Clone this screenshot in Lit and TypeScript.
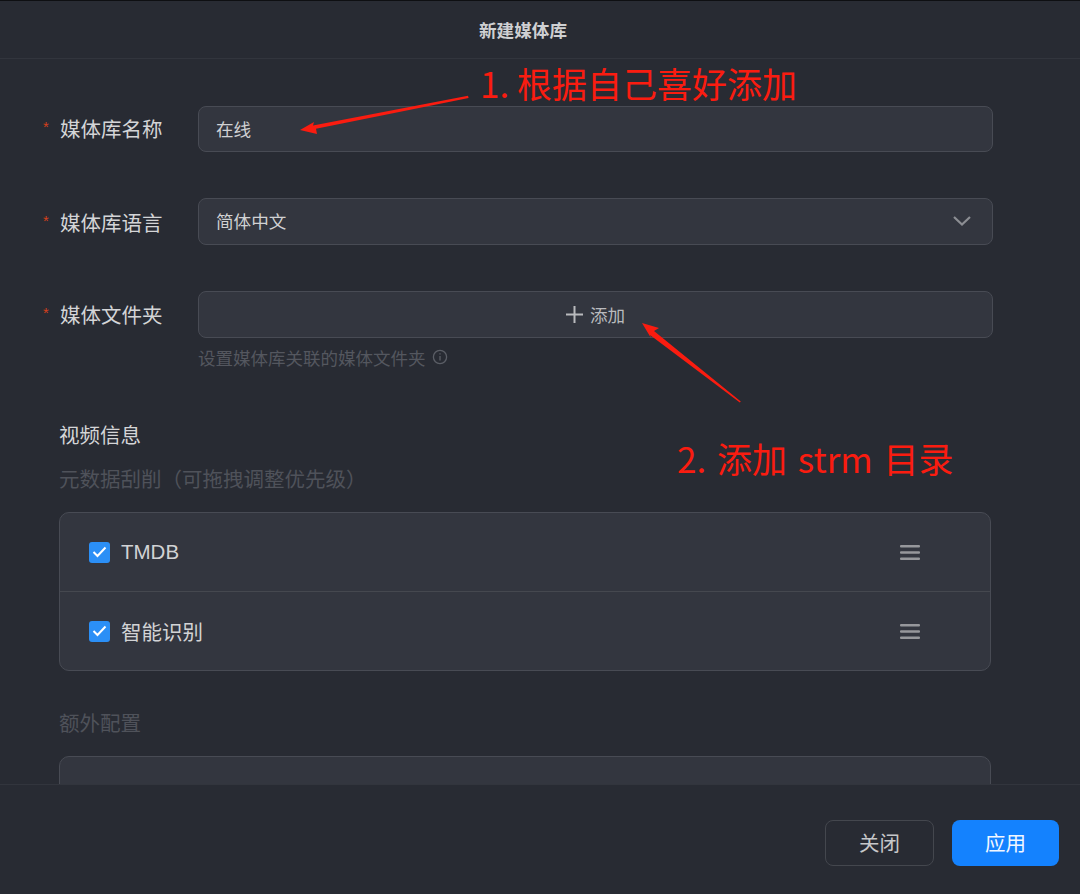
import { LitElement, css, html } from "lit";
import { customElement } from "lit/decorators.js";

const sources = ["TMDB", "智能识别"];

@customElement("app-root")
export class AppRoot extends LitElement {
  static styles = css`
    :host {
      display: block;
      position: relative;
      width: 1080px;
      height: 894px;
      overflow: hidden;
      background: #282b33;
      color: #d2d3d5;
      font-family: "Liberation Sans", "Noto Sans CJK SC", sans-serif;
    }
    .dialog {
      display: flex;
      flex-direction: column;
      height: 894px;
      border-top: 1px solid #0e0f12;
      box-sizing: border-box;
    }
    header {
      flex: none;
      height: 58px;
      box-sizing: border-box;
      border-bottom: 1px solid #32353d;
      padding-right: 34px;
      display: flex;
      align-items: center;
      justify-content: center;
      font-size: 17.6px;
      font-weight: 700;
      color: #cfd0d2;
    }
    main {
      flex: 1;
      min-height: 0;
      overflow: hidden;
      padding: 47px 87px 0 43px;
    }
    .row {
      display: grid;
      grid-template-columns: 155px 1fr;
      margin-bottom: 46px;
    }
    .label {
      display: flex;
      align-items: center;
      height: 46px;
      font-size: 20.5px;
      color: #d4d5d7;
    }
    .label.low {
      padding-top: 2px;
      box-sizing: border-box;
    }
    .star {
      width: 17px;
      flex: none;
      margin-top: -4px;
      font-size: 15px;
      color: #d4401c;
    }
    .field {
      height: 47px;
      box-sizing: border-box;
      display: flex;
      align-items: center;
      padding: 0 17px 2px;
      background: #33363f;
      border: 1px solid #484b54;
      border-radius: 8px;
      font-size: 17.6px;
      color: #d0d1d3;
    }
    .short .label {
      height: 44px;
    }
    .short .field {
      height: 46px;
    }
    .select {
      justify-content: space-between;
      padding: 0 21px 3px 17px;
    }
    .select svg {
      width: 18px;
      height: 10px;
      margin-top: 2px;
    }
    .add {
      justify-content: center;
      gap: 7px;
      padding-bottom: 0;
      color: #b9babd;
    }
    .add svg {
      width: 17px;
      height: 17px;
    }
    .hint {
      display: flex;
      align-items: center;
      gap: 6px;
      height: 24px;
      margin-top: 7px;
      font-size: 17.5px;
      color: #54575f;
    }
    .hint svg {
      width: 16px;
      height: 16px;
    }
    .stack {
      margin-bottom: 53px;
    }
    .section {
      padding-left: 16px;
    }
    h2 {
      margin: 0;
      height: 28px;
      line-height: 28px;
      font-size: 20.5px;
      font-weight: 400;
      color: #d4d5d7;
    }
    .muted {
      height: 28px;
      line-height: 28px;
      font-size: 20.5px;
      color: #4f525a;
    }
    .sub {
      margin-top: 16px;
    }
    .panel {
      box-sizing: border-box;
      margin: 18px 2px 0 0;
      background: #33363f;
      border: 1px solid #484b54;
      border-radius: 10px;
    }
    .sources {
      height: 159px;
    }
    .source {
      height: 78px;
      box-sizing: border-box;
      display: flex;
      align-items: center;
      padding: 0 70px 0 29px;
      font-size: 20.5px;
      color: #d2d3d5;
    }
    .source + .source {
      height: 79px;
      border-top: 1px solid #45484f;
    }
    .check {
      width: 21px;
      height: 21px;
      flex: none;
      margin-right: 11px;
      border-radius: 3px;
      background: #2b8ff6;
      display: flex;
      align-items: center;
      justify-content: center;
    }
    .check svg {
      width: 15px;
      height: 12px;
    }
    .name {
      flex: 1;
    }
    .grip {
      width: 20px;
      height: 15px;
    }
    .extra {
      margin-top: 39px;
    }
    .tall {
      height: 120px;
    }
    footer {
      flex: none;
      height: 110px;
      box-sizing: border-box;
      position: relative;
      background: #282b33;
      border-top: 1px solid #32353d;
      display: flex;
      justify-content: flex-end;
      gap: 18px;
      padding: 35px 21px 0 0;
    }
    button {
      height: 46px;
      box-sizing: border-box;
      border-radius: 8px;
      font-family: inherit;
      font-size: 20.5px;
      padding: 0 0 2px;
    }
    .close {
      width: 109px;
      background: transparent;
      border: 1px solid #44474e;
      color: #c6c7c9;
    }
    .apply {
      width: 107px;
      background: #1482fe;
      border: 0;
      color: #f2f7ff;
    }
    /* red notes pasted over the screenshot */
    .marks {
      position: absolute;
      left: 0;
      top: 0;
      width: 1080px;
      height: 894px;
      pointer-events: none;
    }
    .marks svg {
      position: absolute;
      left: 0;
      top: 0;
    }
    .note {
      position: absolute;
      font-family: "Noto Sans CJK SC", "Liberation Sans", sans-serif;
      font-size: 35px;
      line-height: 44px;
      color: #fa1c10;
      white-space: nowrap;
    }
    .note1 {
      left: 480px;
      top: 61px;
    }
    .note2 {
      left: 677px;
      top: 436px;
      word-spacing: 3px;
    }
  `;

  render() {
    return html`
      <div class="dialog">
        <header>新建媒体库</header>
        <main>
          <div class="row short">
            <div class="label"><span class="star">*</span>媒体库名称</div>
            <div class="field">在线</div>
          </div>
          <div class="row">
            <div class="label low"><span class="star">*</span>媒体库语言</div>
            <div class="field select">
              简体中文
              <svg viewBox="0 0 18 10" fill="none" stroke="#8c8e93" stroke-width="2.2"><path d="M1 1l8 7.5L17 1" /></svg>
            </div>
          </div>
          <div class="row stack">
            <div class="label"><span class="star">*</span>媒体文件夹</div>
            <div>
              <div class="field add">
                <svg viewBox="0 0 17 17" fill="none" stroke="#b9babd" stroke-width="2"><path d="M8.5 0v17M0 8.5h17" /></svg>
                添加
              </div>
              <div class="hint">
                设置媒体库关联的媒体文件夹
                <svg viewBox="0 0 16 16" fill="none" stroke="#5b5e66" stroke-width="1.3">
                  <circle cx="8" cy="8" r="6.6" />
                  <path d="M8 7v4.4M8 4.2v1.4" />
                </svg>
              </div>
            </div>
          </div>
          <div class="section">
            <h2>视频信息</h2>
            <div class="muted sub">元数据刮削（可拖拽调整优先级）</div>
            <div class="panel sources">
              ${sources.map(
                (name) => html`
                  <div class="source">
                    <span class="check">
                      <svg viewBox="0 0 15 12" fill="none" stroke="#fff" stroke-width="2"><path d="M1.5 6l4 4 8-8.5" /></svg>
                    </span>
                    <span class="name">${name}</span>
                    <svg class="grip" viewBox="0 0 20 15" fill="#96979b">
                      <rect y="0" width="20" height="2.4" rx="1" />
                      <rect y="6.3" width="20" height="2.4" rx="1" />
                      <rect y="12.6" width="20" height="2.4" rx="1" />
                    </svg>
                  </div>
                `
              )}
            </div>
            <div class="muted extra">额外配置</div>
            <div class="panel tall"></div>
          </div>
        </main>
        <footer>
          <button class="close">关闭</button>
          <button class="apply">应用</button>
        </footer>
      </div>
      <div class="marks">
        <span class="note note1">1. 根据自己喜好添加</span>
        <span class="note note2">2. 添加 strm 目录</span>
        <svg width="1080" height="894" viewBox="0 0 1080 894">
          <path fill="#fa1c10" d="M300 130L314 122 313 125.500 468 95.800 468.600 98 316 128.800 317 134z" />
          <path fill="#fa1c10" d="M642 323L659 328 654 331 740.800 401.400 739.800 402.600 650 335 651 338z" />
        </svg>
      </div>
    `;
  }
}
